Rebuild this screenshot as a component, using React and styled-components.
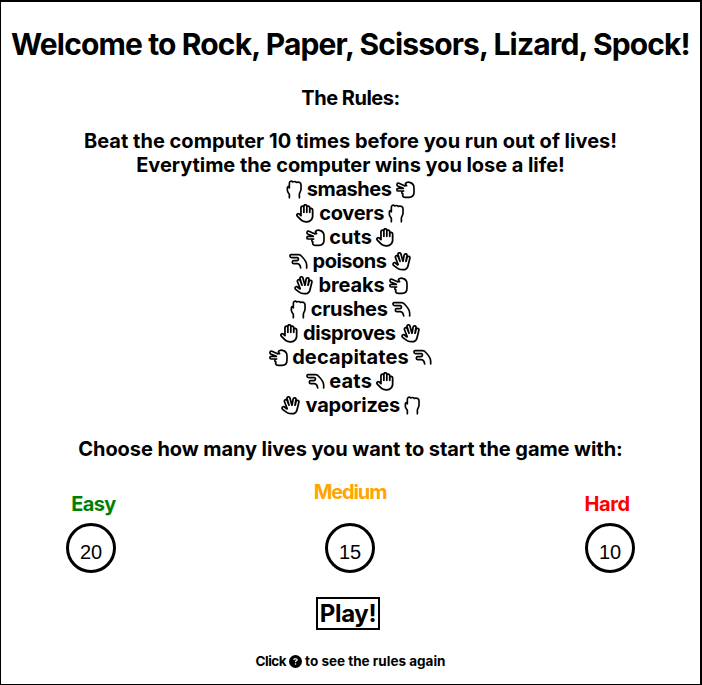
import React from "react";
import styled, { createGlobalStyle } from "styled-components";
import { FaRegHand, FaRegHandSpock, FaCircleQuestion } from "react-icons/fa6";

const GlobalStyle = createGlobalStyle`
  * { box-sizing: border-box; }
  body { margin: 0; background: #fff; }
`;

const Screen = styled.main`
  width: 702px;
  height: 685px;
  border: solid #000;
  border-width: 2px 2px 1px 1px;
  display: flex;
  flex-direction: column;
  align-items: center;
  overflow: hidden;
  color: #000;
  font-family: Inter, "Open Sans", sans-serif;
  font-size: 20px;
  font-weight: 700;
  line-height: 24px;
  white-space: nowrap;
`;

const Title = styled.h1`
  margin: 24px 0 0;
  font-size: 30px;
  line-height: 36px;
  letter-spacing: -0.86px;
`;

const Subtitle = styled.h3`
  margin: 24px 0 19px;
  font-size: 20px;
  letter-spacing: -0.5px;
`;

const Line = styled.div`
  letter-spacing: ${(p) => p.$spacing || 0}px;
`;

const Rule = styled.div`
  display: flex;
  align-items: center;
  gap: 4.2px;
  height: 24px;
`;

const HandBox = styled.span`
  flex: none;
  display: flex;
  align-items: center;
  justify-content: center;
  width: ${(p) => p.$width}px;
  height: 18.7px;

  svg {
    flex: none;
    width: ${(p) => p.$width}px;
    height: ${(p) => p.$height || 18.7}px;
    overflow: visible;
  }
`;

const Stroke = styled.svg`
  fill: none;
  stroke: #000;
  stroke-width: 5;
  stroke-linecap: round;
  stroke-linejoin: round;
`;

const Prompt = styled.h3`
  margin: 20px 0 0;
  font-size: 20px;
  letter-spacing: -0.08px;
`;

const Levels = styled.div`
  align-self: stretch;
  display: grid;
  grid-template-columns: 259px 260px 50px;
  align-items: end;
  height: 94px;
  margin: 18px 0 24px;
  padding-left: 65px;
`;

const Level = styled.div`
  width: 50px;
  display: flex;
  flex-direction: column;
  align-items: center;
`;

const LevelName = styled.div`
  color: ${(p) => p.$color};
  letter-spacing: ${(p) => p.$spacing}px;
  margin-bottom: ${(p) => (p.$raised ? 19 : 7)}px;
  padding-left: ${(p) => Math.max(p.$shift, 0) * 2}px;
  padding-right: ${(p) => Math.max(-p.$shift, 0) * 2}px;
`;

const Lives = styled.button`
  width: 50px;
  height: 50px;
  padding: 8px 0 0;
  border: 3px solid #000;
  border-radius: 50%;
  background: #fff;
  color: #000;
  font: 400 20px "Liberation Sans", Arial, sans-serif;
`;

const Play = styled.button`
  width: 64px;
  height: 33px;
  margin-right: 5px;
  padding: 0;
  border: 2px solid #000;
  background: #fff;
  color: #000;
  font: inherit;
  font-size: 24px;
  line-height: 29px;
  letter-spacing: -0.3px;
`;

const Hint = styled.div`
  display: flex;
  align-items: center;
  gap: 3px;
  height: 16px;
  margin-top: 23px;
  font-size: 13.5px;
  line-height: 16px;

  svg { width: 13px; height: 13px; }
`;

const Rock = () => (
  <HandBox $width={16.4}>
    <Stroke viewBox="0 0 49 56">
      <path d="M10 53V43C7 39 4 36 4 31V25C4 21 6 19 10 19V24M10 22V10C10 3 17 2 20 6C24 4 28 4 31 7C39 5 45 8 45 15V27C45 34 41 36 40 42V53" />
    </Stroke>
  </HandBox>
);

const Paper = () => (
  <HandBox $width={18.7}>
    <FaRegHand />
  </HandBox>
);

const Scissors = () => (
  <HandBox $width={19}>
    <Stroke viewBox="0 0 57 56">
      <path d="M27 18L9 10C4 8 0 14 5 18L22 25H7C1 25 1 33 7 33H23C16 34 16 41 21 42C18 47 21 52 27 52H39C48 52 54 46 54 37V24C54 15 49 9 41 7C34 5 29 8 28 12L32 17" />
    </Stroke>
  </HandBox>
);

const Lizard = () => (
  <HandBox $width={19}>
    <Stroke viewBox="0 0 57 56">
      <path d="M53 48V39C53 32 44 19 37 12C35 9 32 8 28 8H6C1 8 2 16 8 17H25C30 17 29 26 24 26H14C9 26 8 34 14 35H25C31 36 34 40 35 48" />
    </Stroke>
  </HandBox>
);

const Spock = () => (
  <HandBox $width={21} $height={20.5}>
    <FaRegHandSpock />
  </HandBox>
);

const rules = [
  [Rock, "smashes", -0.45, Scissors],
  [Paper, "covers", -0.3, Rock],
  [Scissors, "cuts", 0.05, Paper],
  [Lizard, "poisons", -0.5, Spock],
  [Spock, "breaks", -0.1, Scissors],
  [Rock, "crushes", -0.35, Lizard],
  [Paper, "disproves", -0.4, Spock],
  [Scissors, "decapitates", 0.12, Lizard],
  [Lizard, "eats", 0.2, Paper],
  [Spock, "vaporizes", -0.2, Rock],
];

const levels = [
  { name: "Easy", color: "green", lives: 20, spacing: -0.65, shift: 2.5 },
  { name: "Medium", color: "orange", lives: 15, spacing: -1.1, shift: 0, raised: true },
  { name: "Hard", color: "red", lives: 10, spacing: -0.4, shift: -3 },
];

export default function App() {
  return (
    <Screen>
      <GlobalStyle />
      <Title>Welcome to Rock, Paper, Scissors, Lizard, Spock!</Title>
      <Subtitle>The Rules:</Subtitle>
      <Line $spacing={0.02}>Beat the computer 10 times before you run out of lives!</Line>
      <Line $spacing={-0.05}>Everytime the computer wins you lose a life!</Line>
      {rules.map(([Winner, verb, spacing, Loser]) => (
        <Rule key={verb}>
          <Winner />
          <Line $spacing={spacing}>{verb}</Line>
          <Loser />
        </Rule>
      ))}
      <Prompt>Choose how many lives you want to start the game with:</Prompt>
      <Levels>
        {levels.map((l) => (
          <Level key={l.name}>
            <LevelName $color={l.color} $spacing={l.spacing} $shift={l.shift} $raised={l.raised}>
              {l.name}
            </LevelName>
            <Lives>{l.lives}</Lives>
          </Level>
        ))}
      </Levels>
      <Play>Play!</Play>
      <Hint>
        <Line $spacing={-0.5}>Click</Line>
        <FaCircleQuestion />
        <Line>to see the rules again</Line>
      </Hint>
    </Screen>
  );
}
